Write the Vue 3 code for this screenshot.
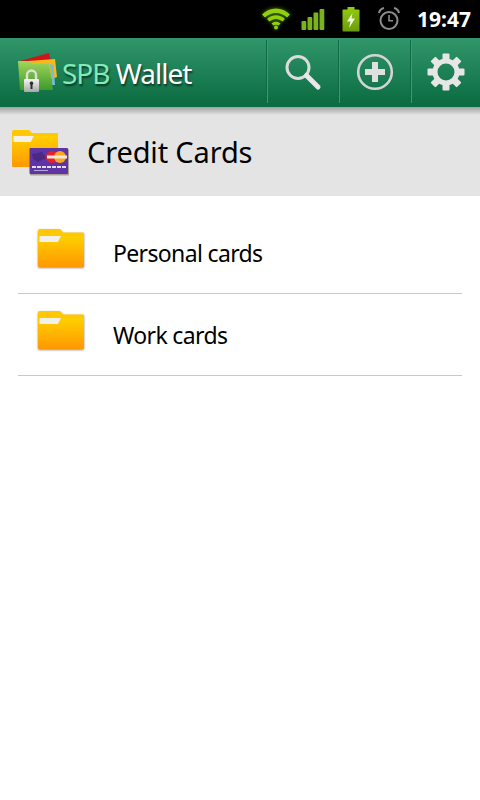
<template>
  <div class="screen">
    <div class="status-bar">
      <svg class="st-wifi" width="30" height="24" viewBox="0 0 30 24">
        <path d="M1 8.500 C8.500 0.500 21.500 0.500 29 8.500 L26 11.500 C19.500 5.500 10.500 5.500 4 11.500 Z" fill="#8fd00c" />
        <path d="M6 13 C11 8 19 8 24 13 L21.500 15.500 C17.500 12 12.500 12 8.500 15.500 Z" fill="#8fd00c" />
        <path d="M10.500 17.500 C13 15 17 15 19.500 17.500 L17.500 19.500 C16 18.500 14 18.500 12.500 19.500 Z" fill="#8fd00c" />
        <circle cx="15" cy="21.500" r="2" fill="#8fd00c" />
      </svg>
      <svg class="st-signal" width="24" height="24" viewBox="0 0 24 24">
        <g fill="#79b51a">
          <rect x="0.500" y="14" width="4.800" height="9" rx="1" />
          <rect x="6.500" y="10" width="4.800" height="13" rx="1" />
          <rect x="12.500" y="5.500" width="4.800" height="17.500" rx="1" />
          <rect x="18.500" y="2" width="4.800" height="21" rx="1" />
        </g>
      </svg>
      <svg class="st-battery" width="18" height="25" viewBox="0 0 18 25">
        <defs>
          <linearGradient id="batteryFill" x1="0" y1="0" x2="0" y2="1">
            <stop offset="0" stop-color="#8fc810" />
            <stop offset="1" stop-color="#6a9c08" />
          </linearGradient>
        </defs>
        <rect x="5.500" y="0" width="7" height="3" fill="#8fc810" />
        <rect x="0.500" y="2.500" width="17" height="22" rx="1" fill="url(#batteryFill)" />
        <path d="M10.500 6 L5 14.500 H8.500 L7 21 L13 11.500 H9.500 Z" fill="#f4f8e8" />
      </svg>
      <svg class="st-alarm" width="22" height="24" viewBox="0 0 22 24">
        <circle cx="11" cy="13.500" r="8.500" fill="none" stroke="#8c8c8c" stroke-width="2" />
        <path d="M11 8 V13.800 H15" fill="none" stroke="#8c8c8c" stroke-width="1.600" />
        <path d="M1 6 C1.500 3.500 3.500 1.500 6 1 M21 6 C20.500 3.500 18.500 1.500 16 1" fill="none" stroke="#8c8c8c" stroke-width="2" />
      </svg>
      <span class="clock">19:47</span>
    </div>

    <header class="app-bar">
      <div class="brand">
        <svg class="brand-icon" width="40" height="42" viewBox="0 0 40 42">
          <defs>
            <linearGradient id="walletGreen" x1="0" y1="0" x2="0" y2="1">
              <stop offset="0" stop-color="#a2d65a" />
              <stop offset="1" stop-color="#3c9a2c" />
            </linearGradient>
            <linearGradient id="lockGrey" x1="0" y1="0" x2="0" y2="1">
              <stop offset="0" stop-color="#f6f6f6" />
              <stop offset="1" stop-color="#a8a8a8" />
            </linearGradient>
          </defs>
          <path d="M2 9 L31 1 L33 9 Z" fill="#d0141c" />
          <path d="M10 9 L37 7 L39 25 L34 27 Z" fill="#f6bb1a" />
          <path d="M32 12 L35.500 13 L37 33 L34 33 Z" fill="#7dbccc" />
          <path d="M0 9 H11 L14 11.500 H31 L35 38 H2 Z" fill="url(#walletGreen)" />
          <path d="M9 28 V23 A4.500 4.500 0 0 1 18 23 V28" fill="none" stroke="#dedede" stroke-width="2.400" />
          <rect x="6" y="27" width="15" height="13" rx="1" fill="url(#lockGrey)" />
          <path d="M13.500 29.500 a1.800 1.800 0 0 1 1 3.300 V37 h-2 V32.800 A1.800 1.800 0 0 1 13.500 29.500 Z" fill="#2c2c2c" />
        </svg>
        <span class="brand-name"><span class="spb">SPB</span> Wallet</span>
      </div>
      <div class="action">
        <svg width="40" height="40" viewBox="0 0 40 40">
          <circle cx="15" cy="15.500" r="11" fill="none" stroke="#dcdcdc" stroke-width="3" />
          <path d="M23.500 23.500 L35 35" stroke="#e8e8e8" stroke-width="5" stroke-linecap="round" />
        </svg>
      </div>
      <div class="action">
        <svg width="38" height="38" viewBox="0 0 38 38">
          <circle cx="19" cy="19" r="16.800" fill="none" stroke="#d4d4d4" stroke-width="2.600" />
          <path d="M19 9 V29 M9 19 H29" stroke="#e0e0e0" stroke-width="6" />
        </svg>
      </div>
      <div class="action">
        <svg width="38" height="38" viewBox="0 0 38 38">
          <g fill="#e6e6e6">
            <rect v-for="a in gearTeeth" :key="a" x="15.500" y="0.500" width="7" height="9" rx="1" :transform="`rotate(${a} 19 19)`" />
          </g>
          <circle cx="19" cy="19" r="11" fill="none" stroke="#e6e6e6" stroke-width="5" />
        </svg>
      </div>
    </header>

    <div class="title-bar">
      <svg class="title-icon" width="60" height="48" viewBox="0 0 60 48">
        <defs>
          <linearGradient id="folderTitle" x1="0" y1="0" x2="0" y2="1">
            <stop offset="0" stop-color="#ffd000" />
            <stop offset="1" stop-color="#ff9800" />
          </linearGradient>
        </defs>
        <path d="M2 4 a2 2 0 0 1 2 -2 H19 L22 5 H47 a1 1 0 0 1 1 1 V36 H2 Z" fill="#ffc800" />
        <path d="M3.500 8 H24 L21 14 H3.500 Z" fill="#f4f1ea" />
        <path d="M2 14 H21 L24 8 H48 V38 a1 1 0 0 1 -1 1 H3 a1 1 0 0 1 -1 -1 Z" fill="url(#folderTitle)" />
        <rect x="20" y="21" width="39" height="26.500" rx="1" fill="#a8a094" />
        <rect x="19.500" y="20" width="38.500" height="26" rx="1" fill="#5f35a5" />
        <path d="M22 26 L32 24 L36 30 L28 34 L23 31 Z" fill="#4a2a80" />
        <circle cx="42" cy="29" r="6" fill="#e8202a" />
        <circle cx="50" cy="29" r="6" fill="#f7a81e" />
        <rect x="37" y="27.500" width="20" height="3" fill="#f3e6d8" />
        <path d="M22 39 H56" stroke="#e4def2" stroke-width="2" stroke-dasharray="4 1" />
        <path d="M24 42.500 H38" stroke="#b9a8dc" stroke-width="1" />
      </svg>
      <h1>Credit Cards</h1>
    </div>

    <ul class="list">
      <li v-for="item in folders" :key="item" class="row">
        <svg class="folder" width="50" height="41" viewBox="0 0 50 41">
          <defs>
            <linearGradient id="folderRow" x1="0" y1="0" x2="0" y2="1">
              <stop offset="0" stop-color="#ffd000" />
              <stop offset="1" stop-color="#ff9800" />
            </linearGradient>
          </defs>
          <path d="M1 2 a2 2 0 0 1 2 -2 H23 L26 3.500 H46 a1 1 0 0 1 1 1 V30 H1 Z" fill="#ffc800" />
          <path d="M2.500 7 H24 L21 13 H2.500 Z" fill="#f2f0ea" />
          <path d="M1 13 H21 L25 7 H47 V37 a1 1 0 0 1 -1 1 H2 a1 1 0 0 1 -1 -1 Z" fill="url(#folderRow)" />
        </svg>
        <span>{{ item }}</span>
      </li>
    </ul>
  </div>
</template>

<script setup>
const folders = ["Personal cards", "Work cards"];
const gearTeeth = [0, 45, 90, 135, 180, 225, 270, 315];
</script>

<style>
body {
  margin: 0;
  background: #fff;
}
</style>

<style scoped>
.screen {
  width: 480px;
  height: 800px;
  overflow: hidden;
  background: #fff;
  font-family: "Noto Sans", "Open Sans", sans-serif;
}

.status-bar {
  height: 38px;
  background: #000;
  display: flex;
  align-items: center;
  padding: 0 9px 0 261px;
  box-sizing: border-box;
}

.st-wifi {
  margin-top: -3px;
  filter: drop-shadow(0 0 2px rgba(143, 208, 12, 0.6));
}

.st-signal {
  margin-left: 10px;
  margin-top: -1px;
}

.st-battery {
  margin-left: 17px;
}

.st-alarm {
  margin-left: 18px;
}

.clock {
  margin-left: auto;
  color: #fff;
  font-size: 21px;
  font-weight: 700;
}

.app-bar {
  height: 69px;
  background: linear-gradient(#31966b, #0a6a40);
  display: flex;
  align-items: stretch;
}

.brand {
  width: 266px;
  display: flex;
  align-items: center;
  padding-left: 18px;
  box-sizing: border-box;
}

.brand-icon {
  flex: none;
}

.brand-name {
  margin-left: 4px;
  font-size: 28px;
  letter-spacing: -1px;
  color: #fff;
  text-shadow: 1px 2px 2px rgba(0, 0, 0, 0.55);
  white-space: nowrap;
}

.spb {
  color: #82eabb;
}

.action {
  width: 72px;
  margin: 2px 0 4px;
  border-left: 1px solid #0f6a45;
  box-shadow: inset 1px 0 0 #3a9a72;
  box-sizing: border-box;
  display: flex;
  align-items: center;
  justify-content: center;
}

.action:last-child {
  width: 70px;
}

.title-bar {
  height: 89px;
  box-sizing: border-box;
  padding-left: 10px;
  background: linear-gradient(#a0a0a0, #e4e4e4 8px);
  display: flex;
  align-items: center;
}

.title-bar h1 {
  margin: 0 0 0 17px;
  font-size: 29px;
  font-weight: 400;
  letter-spacing: -0.15px;
  color: #000;
}

.list {
  list-style: none;
  margin: 0;
  padding: 0 18px;
}

.row {
  height: 82px;
  box-sizing: border-box;
  border-bottom: 1px solid #c8c8c8;
  display: flex;
  align-items: center;
  padding-left: 19px;
  font-size: 23px;
  letter-spacing: -0.65px;
  color: #000;
}

.row:first-child {
  height: 98px;
  padding-top: 16px;
}

.folder {
  flex: none;
  margin-top: -6px;
  filter: drop-shadow(0 1px 1px rgba(0, 0, 0, 0.45));
}

.row span {
  margin-left: 26px;
}
</style>
